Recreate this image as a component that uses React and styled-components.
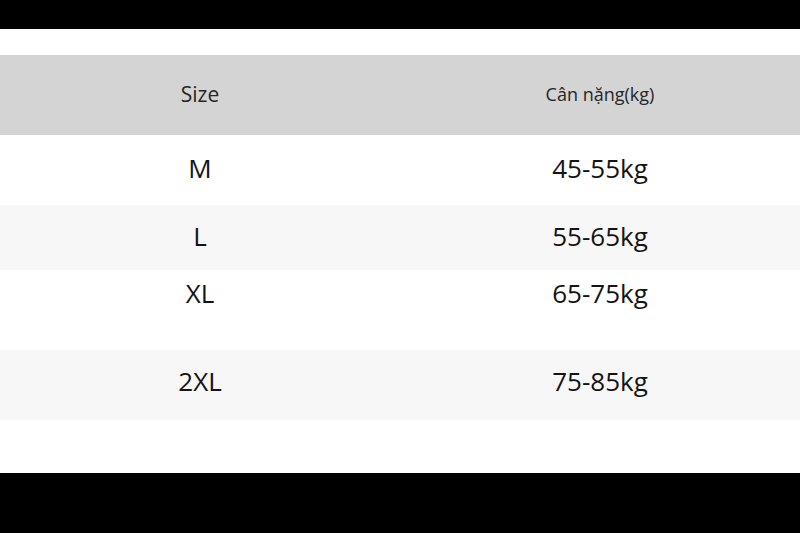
import React from "react";
import styled, { createGlobalStyle } from "styled-components";

const sizes = [
  { size: "M", weight: "45-55kg", height: 70, top: 18, shaded: false },
  { size: "L", weight: "55-65kg", height: 65, top: 16, shaded: true },
  { size: "XL", weight: "65-75kg", height: 80, top: 8, shaded: false },
  { size: "2XL", weight: "75-85kg", height: 70, top: 16, shaded: true },
];

const GlobalStyle = createGlobalStyle`
  html, body {
    margin: 0;
    padding: 0;
    background: #000;
  }
  body {
    font-family: "Open Sans", "Noto Sans", sans-serif;
  }
`;

const Page = styled.div`
  width: 800px;
  height: 533px;
  display: flex;
  flex-direction: column;
  background: #000;
`;

const Bar = styled.div`
  height: ${(p) => p.h}px;
  background: #000;
  flex-shrink: 0;
`;

const Sheet = styled.div`
  flex: 1;
  background: #fff;
  padding-top: 26px;
  display: flex;
  flex-direction: column;
`;

const Row = styled.div`
  display: grid;
  grid-template-columns: 1fr 1fr;
  height: ${(p) => p.h}px;
  padding-top: ${(p) => p.top}px;
  box-sizing: border-box;
  background: ${(p) => p.bg};
`;

const HeadCell = styled.div`
  text-align: center;
  line-height: 30px;
  font-size: ${(p) => p.fs}px;
  color: #262626;
`;

const Cell = styled.div`
  text-align: center;
  line-height: 30px;
  font-size: 26px;
  color: #141414;
`;

export default function App() {
  return (
    <>
      <GlobalStyle />
      <Page>
        <Bar h={29} />
        <Sheet>
          <Row h={80} top={24} bg="#d4d4d4">
            <HeadCell fs={21}>Size</HeadCell>
            <HeadCell fs={18}>Cân nặng(kg)</HeadCell>
          </Row>
          {sizes.map((s) => (
            <Row key={s.size} h={s.height} top={s.top} bg={s.shaded ? "#f7f7f7" : "#fff"}>
              <Cell>{s.size}</Cell>
              <Cell>{s.weight}</Cell>
            </Row>
          ))}
        </Sheet>
        <Bar h={60} />
      </Page>
    </>
  );
}
